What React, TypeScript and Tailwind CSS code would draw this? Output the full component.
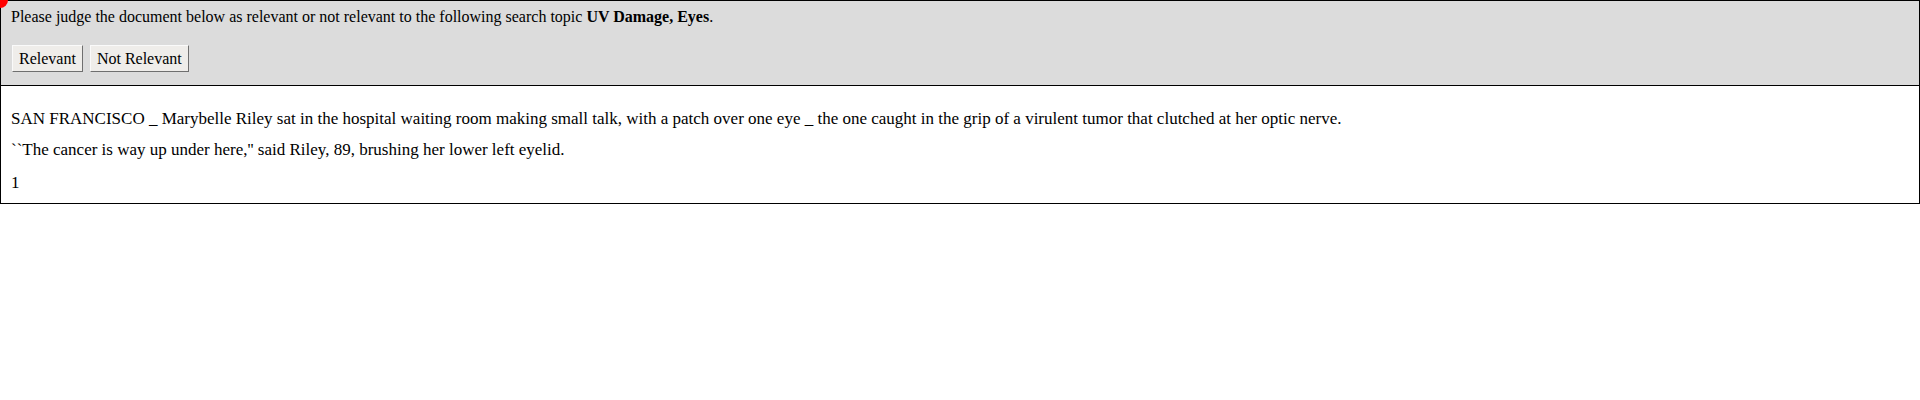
import React from 'react';

const JudgeButton: React.FC<{ label: string }> = ({ label }) => (
  <button
    type="button"
    className="h-[27px] px-[6px] bg-[#efedea] text-black text-[16px] leading-none border-[1.5px] border-t-[#fafafa] border-l-[#fafafa] border-b-[#6f6f6f] border-r-[#6f6f6f]"
  >
    {label}
  </button>
);

export default function App() {
  return (
    <div className="relative w-[1920px] min-h-[400px] bg-white text-black font-['Liberation_Serif',serif] text-[16px]">
      <div className="absolute -left-[8px] -top-[8px] w-[16px] h-[16px] rounded-full bg-[#ff0000]"></div>

      <div className="border border-black bg-[#dcdcdc] px-[10px] pt-[7px] h-[86px]">
        <p className="leading-[18px]">
          Please judge the document below as relevant or not relevant to the following search topic{' '}
          <b>UV Damage, Eyes</b>.
        </p>
        <div className="flex gap-[7px] mt-[19px] pl-[1px]">
          <JudgeButton label="Relevant" />
          <JudgeButton label="Not Relevant" />
        </div>
      </div>

      <div className="border border-t-0 border-black px-[10px] pt-[23px] pb-[8px] h-[118px] text-[17px]">
        <p className="leading-[19px]">
          SAN FRANCISCO _ Marybelle Riley sat in the hospital waiting room making small talk, with a patch over one eye _ the one caught in the grip of a virulent tumor that clutched at her optic nerve.
        </p>
        <p className="leading-[19px] mt-[12px]">
          ``The cancer is way up under here,'' said Riley, 89, brushing her lower left eyelid.
        </p>
        <p className="leading-[19px] mt-[14px]">1</p>
      </div>
    </div>
  );
}
